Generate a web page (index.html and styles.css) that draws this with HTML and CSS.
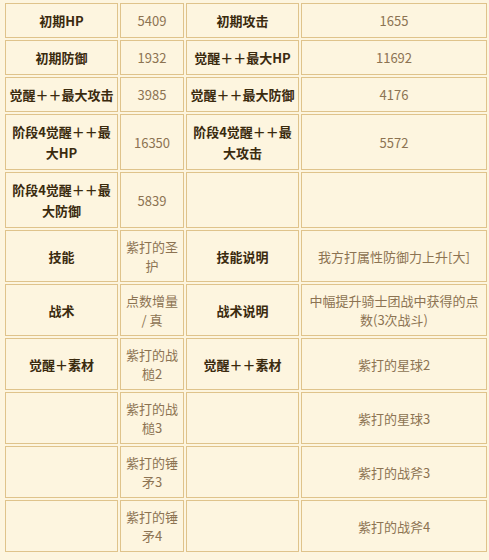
FILE: index.html
```html
<!DOCTYPE html>
<html lang="zh-CN">
<head>
<meta charset="utf-8">
<title>属性表</title>
<link rel="stylesheet" href="styles.css">
</head>
<body>
<div class="wrap">
<table class="stats">
  <colgroup>
    <col class="c1"><col class="c2"><col class="c3"><col class="c4">
  </colgroup>
  <tr><th>初期HP</th><td>5409</td><th>初期攻击</th><td>1655</td></tr>
  <tr><th>初期防御</th><td>1932</td><th>觉醒＋＋最大HP</th><td>11692</td></tr>
  <tr><th>觉醒＋＋最大攻击</th><td>3985</td><th>觉醒＋＋最大防御</th><td>4176</td></tr>
  <tr><th>阶段4觉醒＋＋最大HP</th><td>16350</td><th>阶段4觉醒＋＋最大攻击</th><td>5572</td></tr>
  <tr><th>阶段4觉醒＋＋最大防御</th><td>5839</td><th></th><td></td></tr>
  <tr><th>技能</th><td>紫打的圣护</td><th>技能说明</th><td>我方打属性防御力上升[大]</td></tr>
  <tr><th>战术</th><td>点数增量 / 真</td><th>战术说明</th><td>中幅提升骑士团战中获得的点数(3次战斗)</td></tr>
  <tr><th>觉醒＋素材</th><td>紫打的战槌2</td><th>觉醒＋＋素材</th><td>紫打的星球2</td></tr>
  <tr><th></th><td>紫打的战槌3</td><th></th><td>紫打的星球3</td></tr>
  <tr><th></th><td>紫打的锤矛3</td><th></th><td>紫打的战斧3</td></tr>
  <tr><th></th><td>紫打的锤矛4</td><th></th><td>紫打的战斧4</td></tr>
</table>
</div>
</body>
</html>
```

FILE: styles.css
```css
html, body {
  margin: 0;
  padding: 0;
  background: #fdf5df;
}
.wrap {
  padding: 1px 3px;
}
.stats {
  border-collapse: separate;
  border-spacing: 2px;
  table-layout: fixed;
  width: 485px;
  font-family: "Noto Sans CJK SC", "Noto Sans", sans-serif;
  font-size: 13px;
}
.c1 { width: 113px; }
.c2 { width: 64px; }
.c3 { width: 113px; }
.c4 { width: 186px; }
.stats th, .stats td {
  border: 1px solid #dfc38b;
  background: #fdf5df;
  padding: 6px 3px;
  text-align: center;
  vertical-align: middle;
}
.stats th {
  font-weight: bold;
  color: #3a2a0e;
  line-height: 21px;
}
.stats td {
  font-weight: normal;
  color: #8c7352;
  line-height: 19px;
}
```
